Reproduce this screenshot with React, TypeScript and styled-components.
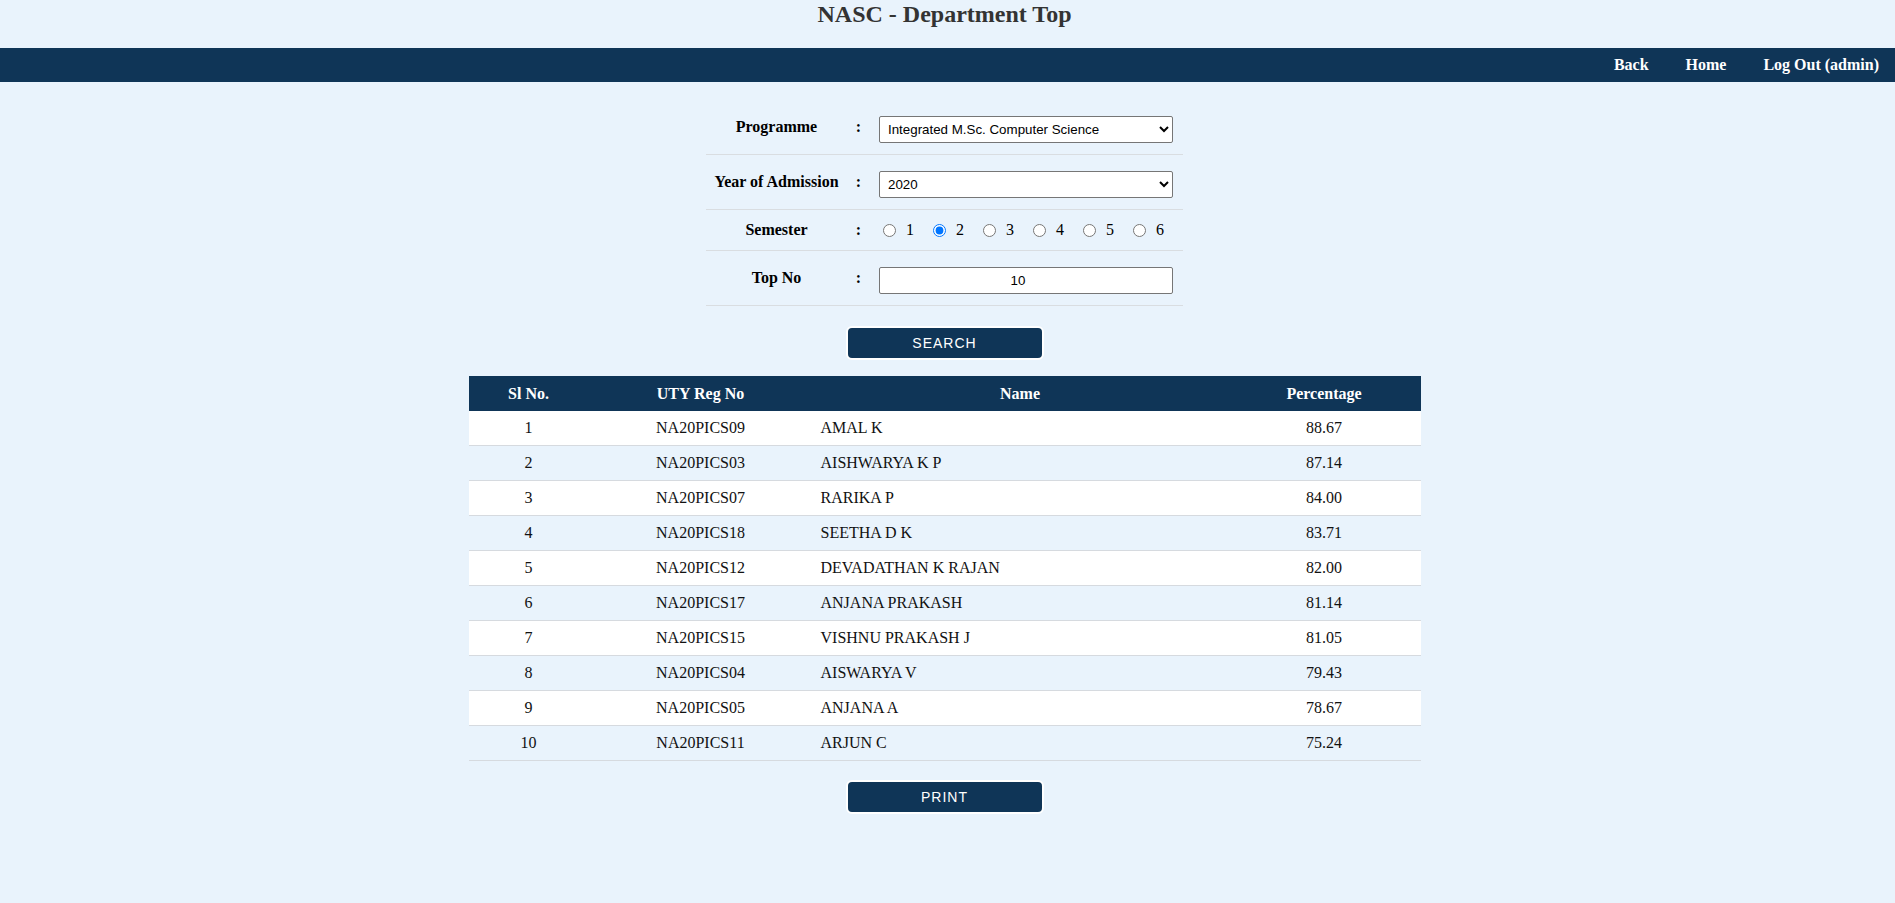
import { FC } from 'react';
import styled, { createGlobalStyle } from 'styled-components';

const GlobalStyle = createGlobalStyle`
  html, body {
    margin: 0;
    padding: 0;
    background: #e9f3fc;
    font-family: 'Liberation Serif', 'Times New Roman', serif;
  }
`;

const NAVY = '#0f3557';

const Page = styled.div`
  min-height: 903px;
  background: #e9f3fc;
`;

const Title = styled.h2`
  margin: 0;
  padding: 1px 6px 0 0;
  height: 47px;
  text-align: center;
  font-size: 24px;
  font-weight: bold;
  color: #333;
`;

const NavBar = styled.nav`
  height: 34px;
  background: ${NAVY};
  display: flex;
  justify-content: flex-end;
  align-items: center;
  gap: 37px;
  padding-right: 16px;
`;

const NavLink = styled.a`
  color: #fff;
  font-size: 16px;
  font-weight: bold;
  text-decoration: none;
  cursor: pointer;
`;

const Main = styled.main`
  display: flex;
  flex-direction: column;
  align-items: center;
  padding: 18px 6px 40px 0;
`;

const FormTable = styled.div`
  width: 477px;
  display: flex;
  flex-direction: column;
`;

const FormRow = styled.div<{ $tall?: boolean }>`
  display: grid;
  grid-template-columns: 141px 23px 1fr;
  align-items: center;
  min-height: ${({ $tall }) => ($tall ? '54px' : '40px')};
  border-bottom: 1px solid #d9dde1;
`;

const Label = styled.div`
  text-align: center;
  font-size: 16px;
  font-weight: bold;
  color: #000;
`;

const Colon = styled.div`
  text-align: center;
  font-size: 16px;
  font-weight: bold;
`;

const Field = styled.div`
  padding-left: 9px;
  display: flex;
  align-items: center;
`;

const Select = styled.select`
  width: 294px;
  height: 27px;
  margin: 16px 0 11px;
  padding: 0 4px;
  font-family: 'Liberation Sans', Arial, sans-serif;
  font-size: 13.33px;
  color: #000;
  background: #fff;
  border: 1px solid #767676;
  border-radius: 2px;
  box-sizing: border-box;
`;

const TextInput = styled.input`
  width: 294px;
  height: 27px;
  margin: 16px 0 11px;
  padding: 0 20px 0 4px;
  text-align: center;
  font-family: 'Liberation Sans', Arial, sans-serif;
  font-size: 13.33px;
  color: #000;
  background: #fff;
  border: 1px solid #767676;
  border-radius: 2px;
  box-sizing: border-box;
`;

const RadioItem = styled.label`
  width: 50px;
  display: inline-flex;
  align-items: center;
  font-size: 16px;
  color: #000;
`;

const Radio = styled.input`
  width: 13px;
  height: 13px;
  margin: 0 10px 0 4px;
`;

const ActionButton = styled.button<{ $gap: number }>`
  margin-top: ${({ $gap }) => $gap}px;
  width: 198px;
  height: 34px;
  border: 2px solid #fff;
  border-radius: 6px;
  background: ${NAVY};
  color: #fff;
  font-family: 'Liberation Sans', Arial, sans-serif;
  font-size: 14px;
  letter-spacing: 1px;
  text-transform: uppercase;
  cursor: pointer;
`;

const ResultTable = styled.table`
  margin-top: 16px;
  width: 952px;
  border-collapse: collapse;
  table-layout: fixed;
  font-size: 16px;
`;

const HeadCell = styled.th<{ $w: number }>`
  width: ${({ $w }) => $w}px;
  height: 35px;
  padding: 0;
  background: ${NAVY};
  color: #fff;
  font-weight: bold;
  text-align: center;
`;

const BodyRow = styled.tr<{ $odd: boolean }>`
  background: ${({ $odd }) => ($odd ? '#fff' : '#e9f3fc')};
  border-bottom: 1px solid #d6dadf;
`;

const Cell = styled.td<{ $left?: boolean }>`
  height: 34px;
  padding: 0 ${({ $left }) => ($left ? '8px' : '0')};
  text-align: ${({ $left }) => ($left ? 'left' : 'center')};
  color: #111;
`;

const rows = [
  ['NA20PICS09', 'AMAL K', '88.67'],
  ['NA20PICS03', 'AISHWARYA K P', '87.14'],
  ['NA20PICS07', 'RARIKA P', '84.00'],
  ['NA20PICS18', 'SEETHA D K', '83.71'],
  ['NA20PICS12', 'DEVADATHAN K RAJAN', '82.00'],
  ['NA20PICS17', 'ANJANA PRAKASH', '81.14'],
  ['NA20PICS15', 'VISHNU PRAKASH J', '81.05'],
  ['NA20PICS04', 'AISWARYA V', '79.43'],
  ['NA20PICS05', 'ANJANA A', '78.67'],
  ['NA20PICS11', 'ARJUN C', '75.24']
];

const App: FC = () => {
  return (
    <Page>
      <GlobalStyle />
      <Title>NASC - Department Top</Title>
      <NavBar>
        <NavLink>Back</NavLink>
        <NavLink>Home</NavLink>
        <NavLink>Log Out (admin)</NavLink>
      </NavBar>

      <Main>
        <FormTable>
          <FormRow $tall>
            <Label>Programme</Label>
            <Colon>:</Colon>
            <Field>
              <Select defaultValue="imsc">
                <option value="imsc">Integrated M.Sc. Computer Science</option>
              </Select>
            </Field>
          </FormRow>
          <FormRow $tall>
            <Label>Year of Admission</Label>
            <Colon>:</Colon>
            <Field>
              <Select defaultValue="2020">
                <option value="2020">2020</option>
              </Select>
            </Field>
          </FormRow>
          <FormRow>
            <Label>Semester</Label>
            <Colon>:</Colon>
            <Field>
              {[1, 2, 3, 4, 5, 6].map((n) => (
                <RadioItem key={n}>
                  <Radio type="radio" name="sem" defaultChecked={n === 2} />
                  {n}
                </RadioItem>
              ))}
            </Field>
          </FormRow>
          <FormRow $tall>
            <Label>Top No</Label>
            <Colon>:</Colon>
            <Field>
              <TextInput type="text" defaultValue="10" />
            </Field>
          </FormRow>
        </FormTable>

        <ActionButton $gap={20}>Search</ActionButton>

        <ResultTable>
          <thead>
            <tr>
              <HeadCell $w={120}>Sl No.</HeadCell>
              <HeadCell $w={224}>UTY Reg No</HeadCell>
              <HeadCell $w={415}>Name</HeadCell>
              <HeadCell $w={193}>Percentage</HeadCell>
            </tr>
          </thead>
          <tbody>
            {rows.map(([reg, name, pct], i) => (
              <BodyRow key={reg} $odd={i % 2 === 0}>
                <Cell>{i + 1}</Cell>
                <Cell>{reg}</Cell>
                <Cell $left>{name}</Cell>
                <Cell>{pct}</Cell>
              </BodyRow>
            ))}
          </tbody>
        </ResultTable>

        <ActionButton $gap={19}>Print</ActionButton>
      </Main>
    </Page>
  );
};

export default App;
